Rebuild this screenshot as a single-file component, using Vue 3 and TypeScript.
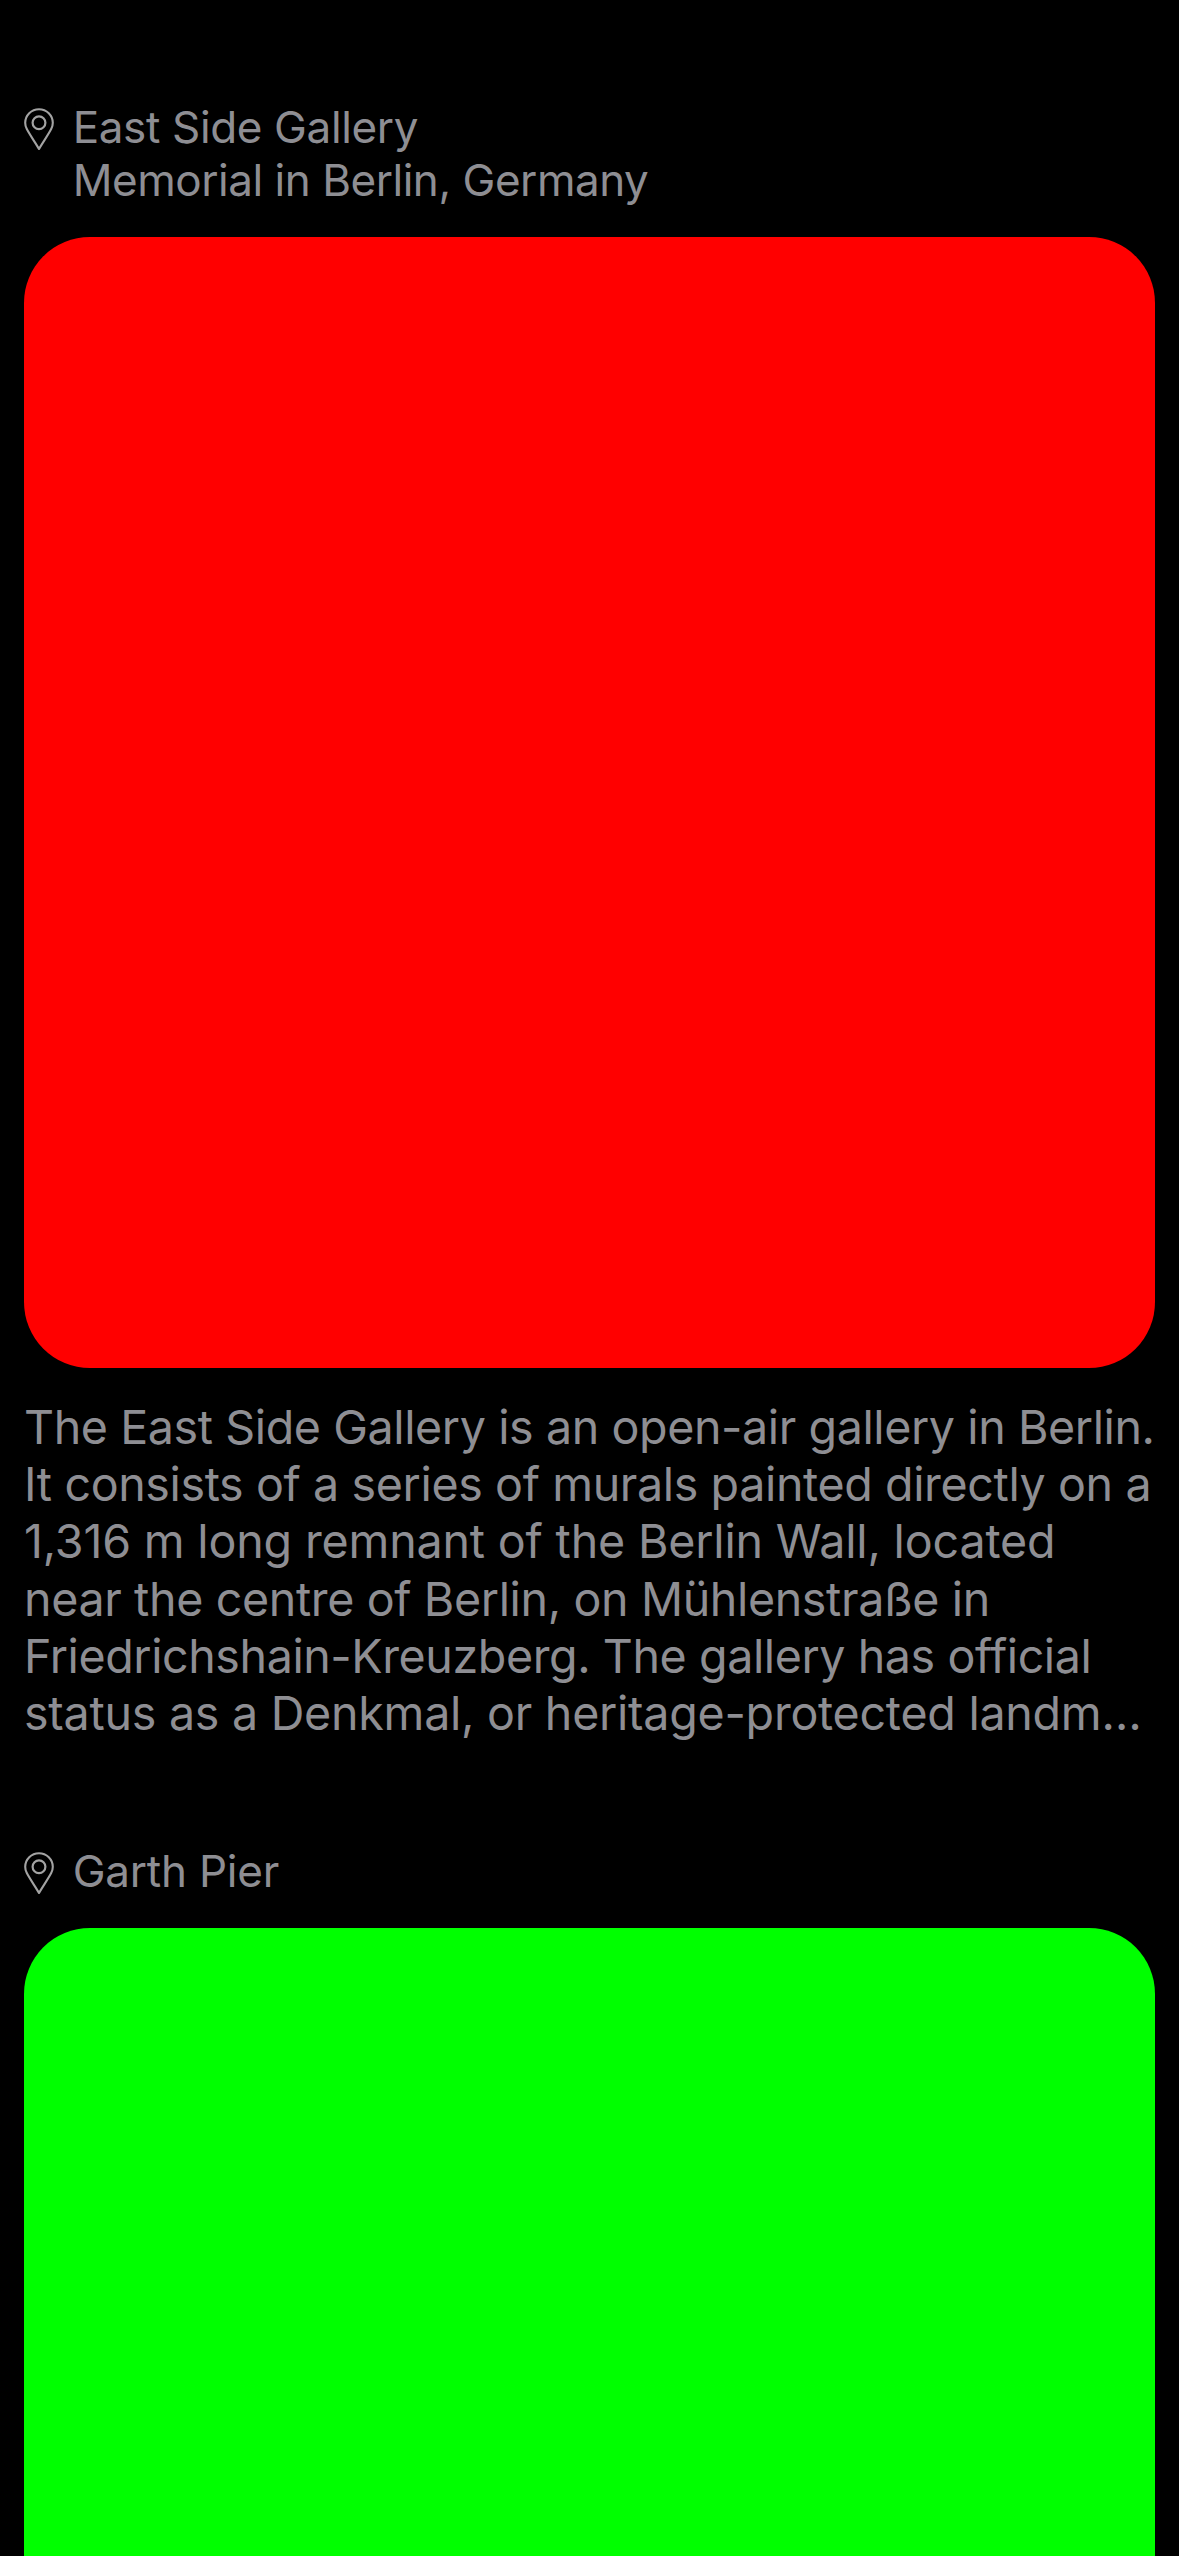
<script setup lang="ts">
interface Line {
  text: string
  tracking: number
}

interface Place {
  id: string
  color: string
  title: Line[]
  body: Line[]
}

const places: Place[] = [
  {
    id: 'east-side-gallery',
    color: '#ff0000',
    title: [
      { text: 'East Side Gallery', tracking: -0.36 },
      { text: 'Memorial in Berlin, Germany', tracking: -0.46 },
    ],
    body: [
      { text: 'The East Side Gallery is an open-air gallery in Berlin.', tracking: -0.41 },
      { text: 'It consists of a series of murals painted directly on a', tracking: -0.384 },
      { text: '1,316 m long remnant of the Berlin Wall, located', tracking: -0.175 },
      { text: 'near the centre of Berlin, on Mühlenstraße in', tracking: -0.37 },
      { text: 'Friedrichshain-Kreuzberg. The gallery has official', tracking: -0.42 },
      { text: 'status as a Denkmal, or heritage-protected landm…', tracking: -0.26 },
    ],
  },
  {
    id: 'garth-pier',
    color: '#00ff00',
    title: [{ text: 'Garth Pier', tracking: -0.22 }],
    body: [],
  },
]
</script>

<template>
  <main class="feed">
    <article v-for="place in places" :key="place.id" class="place">
      <header class="heading">
        <svg class="pin" viewBox="0 0 30 43" fill="none" stroke="#a3a3a3" aria-hidden="true">
          <path
            d="M15 41C12 35.6 5.6 26.6 2.7 20.8C1.6 18.7 1.2 16.8 1.2 14.8C1.2 7.4 7.3 1.2 15 1.2C22.7 1.2 28.8 7.4 28.8 14.8C28.8 16.8 28.4 18.7 27.3 20.8C24.4 26.6 18 35.6 15 41Z"
            stroke-width="2.1"
            stroke-linejoin="round"
          />
          <circle cx="15" cy="14.8" r="6.4" stroke-width="2.2" />
        </svg>
        <h2 class="title">
          <span
            v-for="line in place.title"
            :key="line.text"
            class="line"
            :style="{ letterSpacing: line.tracking + 'px' }"
          >{{ line.text }}</span>
        </h2>
      </header>
      <div class="photo" :style="{ backgroundColor: place.color }"></div>
      <p v-if="place.body.length" class="body">
        <span
          v-for="line in place.body"
          :key="line.text"
          class="line"
          :style="{ letterSpacing: line.tracking + 'px' }"
        >{{ line.text }}</span>
      </p>
    </article>
  </main>
</template>

<style scoped>
.feed {
  box-sizing: border-box;
  display: flex;
  flex-direction: column;
  gap: 102.8px;
  width: 1179px;
  height: 2556px;
  padding: 101px 24px 0;
  overflow: hidden;
  background: #000;
  color: #8e8e93;
  font-family: Inter, 'Liberation Sans', sans-serif;
}

.place {
  display: flex;
  flex-direction: column;
  flex-shrink: 0;
  gap: 30px;
}

.heading {
  display: flex;
  align-items: flex-start;
  gap: 18.7px;
}

.pin {
  flex: none;
  width: 30px;
  height: 43px;
  margin-top: 7px;
}

.title {
  margin: 0;
  font-size: 44px;
  font-weight: 400;
  line-height: 53px;
}

.photo {
  height: 1131px;
  border-radius: 66px;
}

.body {
  margin: 0;
  padding-top: 1px;
  font-size: 46.6px;
  line-height: 57.2px;
}

.line {
  display: block;
  white-space: nowrap;
}
</style>

<style>
body {
  margin: 0;
  background: #000;
}
</style>
